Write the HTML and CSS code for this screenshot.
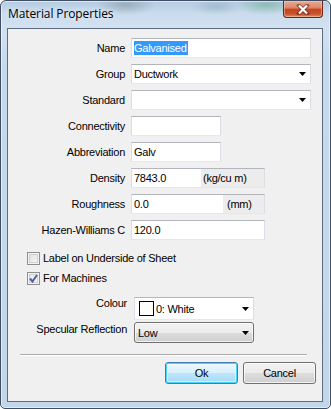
FILE: index.html
```html
<!DOCTYPE html>
<html>
<head>
<meta charset="utf-8">
<link rel="stylesheet" href="styles.css">
</head>
<body>
<div class="window">
  <div class="titlebar">
    <span class="title">Material Properties</span>
    <div class="close">
      <svg width="14" height="11" viewBox="0 0 14 11"><path d="M3 1.5 L11 9.5 M11 1.5 L3 9.5" stroke="#5a1b10" stroke-width="4" stroke-linecap="square" opacity="0.55"/><path d="M3 1.5 L11 9.5 M11 1.5 L3 9.5" stroke="#fff" stroke-width="2.2"/></svg>
    </div>
  </div>
  <div class="client">
    <div class="form">
      <span class="lbl">Name</span>
      <div class="tb w-full"><span class="hl">Galvanised</span></div>
      <span class="lbl">Group</span>
      <div class="tb w-full combo"><span class="txt">Ductwork</span><svg class="arrow" width="7" height="4" viewBox="0 0 7 4"><path d="M0 0H7L3.5 4Z" fill="#000"/></svg></div>
      <span class="lbl">Standard</span>
      <div class="tb w-full combo"><span class="txt"></span><svg class="arrow" width="7" height="4" viewBox="0 0 7 4"><path d="M0 0H7L3.5 4Z" fill="#000"/></svg></div>
      <span class="lbl">Connectivity</span>
      <div class="tb w-short"></div>
      <span class="lbl">Abbreviation</span>
      <div class="tb w-short">Galv</div>
      <span class="lbl">Density</span>
      <div class="tb w-mid unitbox"><span class="val v-density">7843.0</span><span class="unit">(kg/cu m)</span></div>
      <span class="lbl">Roughness</span>
      <div class="tb w-mid unitbox"><span class="val v-rough">0.0</span><span class="unit u-mm">(mm)</span></div>
      <span class="lbl">Hazen-Williams C</span>
      <div class="tb w-mid">120.0</div>
    </div>
    <div class="checks">
      <div class="chk"><span class="box"></span><span>Label on Underside of Sheet</span></div>
      <div class="chk"><span class="box checked"><svg width="9" height="9" viewBox="0 0 9 9"><path d="M1 4.5 L3.5 7.5 L8 1" fill="none" stroke="#4c61a0" stroke-width="2"/></svg></span><span>For Machines</span></div>
    </div>
    <div class="form2">
      <span class="lbl2">Colour</span>
      <div class="colcombo"><span class="swatch"></span><span class="txt">0: White</span><svg class="arrow" width="7" height="4" viewBox="0 0 7 4"><path d="M0 0H7L3.5 4Z" fill="#000"/></svg></div>
      <span class="lbl2 l-spec">Specular Reflection</span>
      <div class="btncombo"><span class="txt">Low</span><svg class="arrow" width="7" height="4" viewBox="0 0 7 4"><path d="M0 0H7L3.5 4Z" fill="#000"/></svg></div>
    </div>
    <div class="sep"></div>
    <div class="buttons">
      <div class="btn default">Ok</div>
      <div class="btn">Cancel</div>
    </div>
  </div>
</div>
</body>
</html>
```
FILE: styles.css
```css
* { box-sizing: border-box; margin: 0; padding: 0; }
html, body { width: 331px; height: 409px; overflow: hidden; background: #ffffff; }
body {
  font-family: "Liberation Sans", Arial, sans-serif;
  font-size: 11px;
  letter-spacing: -0.25px;
  color: #000;
}
.window {
  width: 331px;
  height: 409px;
  display: flex;
  flex-direction: column;
  padding: 0 7px 6px 6px;
  border: 1px solid #3f4e60;
  border-radius: 6px 6px 5px 5px;
  background:
    radial-gradient(ellipse 30px 10px at 125px 4px, rgba(90,110,120,0.35), transparent),
    radial-gradient(ellipse 30px 10px at 265px 4px, rgba(60,150,90,0.35), transparent),
    radial-gradient(ellipse 25px 8px at 215px 6px, rgba(80,120,140,0.25), transparent),
    linear-gradient(180deg, #b4cbe2 0px, #c9dbed 12px, #d3e2f1 26px, #c7d9ec 60px, #c2d6ea 100%);
  box-shadow: inset 0 0 0 1px rgba(255,255,255,0.55);
}
.titlebar {
  height: 27px;
  display: flex;
  justify-content: space-between;
  align-items: flex-start;
}
.title {
  font-family: "Open Sans", "Noto Sans", sans-serif;
  font-size: 12px;
  letter-spacing: -0.1px;
  line-height: 16px;
  margin: 5px 0 0 1px;
  color: #000;
  text-shadow: 0 0 6px rgba(255,255,255,0.9);
}
.close {
  width: 40px;
  height: 17px;
  border: 1px solid #6a2416;
  border-top: none;
  border-radius: 0 0 4px 4px;
  background: linear-gradient(180deg, #e9a995 0%, #dc8468 45%, #c4441f 50%, #c9512b 80%, #e08a62 100%);
  box-shadow: inset 0 0 0 1px rgba(255,220,200,0.45);
  display: flex;
  align-items: center;
  justify-content: center;
}
.client {
  flex: 1;
  border: 1px solid #5d6d80;
  background: #f0f0f0;
  display: flex;
  flex-direction: column;
}
.form {
  display: grid;
  grid-template-columns: 117px auto;
  column-gap: 6px;
  row-gap: 6px;
  grid-auto-rows: 20px;
  padding-top: 9px;
  justify-items: start;
}
.lbl {
  justify-self: end;
  align-self: center;
  line-height: 13px;
}
.tb {
  height: 20px;
  border: 1px solid;
  border-color: #b2b5bc #dadde3 #e3e8ee #dadde3;
  background: #fff;
  padding-left: 2px;
  display: flex;
  align-items: center;
  line-height: 13px;
}
.w-full { width: 180px; }
.w-short { width: 90px; }
.w-mid { width: 134px; }
.hl {
  background: #3399ff;
  color: #fff;
  height: 14px;
  line-height: 14px;
  padding: 0 1px 0 0;
}
.combo { justify-content: space-between; padding-right: 4px; }
.arrow { flex: none; }
.unitbox { padding-left: 0; background: #ececec; }
.val {
  background: #fff;
  height: 100%;
  display: flex;
  align-items: center;
  padding-left: 2px;
}
.v-density { width: 69px; }
.v-rough { width: 91px; }
.unit { padding-left: 2px; }
.u-mm { padding-left: 4px; }
.checks {
  margin-top: 12px;
  padding-left: 19px;
  display: flex;
  flex-direction: column;
  gap: 7px;
}
.chk {
  display: flex;
  align-items: center;
  gap: 3px;
  height: 13px;
  line-height: 13px;
}
.box {
  width: 13px;
  height: 13px;
  border: 1px solid #8f8f8f;
  background: linear-gradient(135deg, #dcdcdc, #fbfbfb);
  box-shadow: inset 0 0 0 1px #f4f4f4, inset 0 0 0 2px #cfcfcf;
  display: flex;
  align-items: center;
  justify-content: center;
}
.box.checked { background: linear-gradient(135deg, #e2e2e2, #ffffff); }
.form2 {
  margin-top: 12px;
  display: grid;
  grid-template-columns: 119px 120px;
  grid-template-rows: 23px 21px;
  column-gap: 7px;
  row-gap: 2px;
}
.lbl2 {
  justify-self: end;
  align-self: start;
  line-height: 13px;
}
.l-spec { padding-top: 1px; }
.colcombo {
  border: 1px solid;
  border-color: #b2b5bc #dadde3 #e3e8ee #dadde3;
  background: #fff;
  display: flex;
  align-items: center;
  padding: 0 4px 0 4px;
}
.swatch {
  width: 15px;
  height: 15px;
  border: 1px solid #000;
  background: #fff;
  margin-right: 2px;
  flex: none;
}
.colcombo .txt { flex: 1; }
.btncombo {
  border: 1px solid #707070;
  border-radius: 3px;
  background: linear-gradient(180deg, #f2f2f2 0%, #ebebeb 50%, #dddddd 51%, #cfcfcf 100%);
  box-shadow: inset 0 0 0 1px rgba(255,255,255,0.7);
  display: flex;
  align-items: center;
  justify-content: space-between;
  padding: 0 4px 0 3px;
}
.sep {
  margin: 11px 15px 0 12px;
  border-top: 1px solid #a9a9a9;
  border-bottom: 1px solid #ffffff;
}
.buttons {
  margin-top: 6px;
  display: flex;
  justify-content: flex-end;
  gap: 5px;
  padding-right: 6px;
}
.btn {
  width: 73px;
  height: 22px;
  border: 1px solid #707070;
  border-radius: 3px;
  background: linear-gradient(180deg, #f2f2f2 0%, #ebebeb 50%, #dddddd 51%, #cfcfcf 100%);
  box-shadow: inset 0 0 0 1px rgba(255,255,255,0.75);
  display: flex;
  align-items: center;
  justify-content: center;
  line-height: 13px;
}
.btn.default {
  border-color: #3c7fb1;
  background: linear-gradient(180deg, #eaf6fd 0%, #d9f0fc 50%, #bee6fd 51%, #a7d9f5 100%);
  box-shadow: inset 0 0 0 1px #48d4f8, inset 0 0 0 2px rgba(255,255,255,0.5);
}
```
